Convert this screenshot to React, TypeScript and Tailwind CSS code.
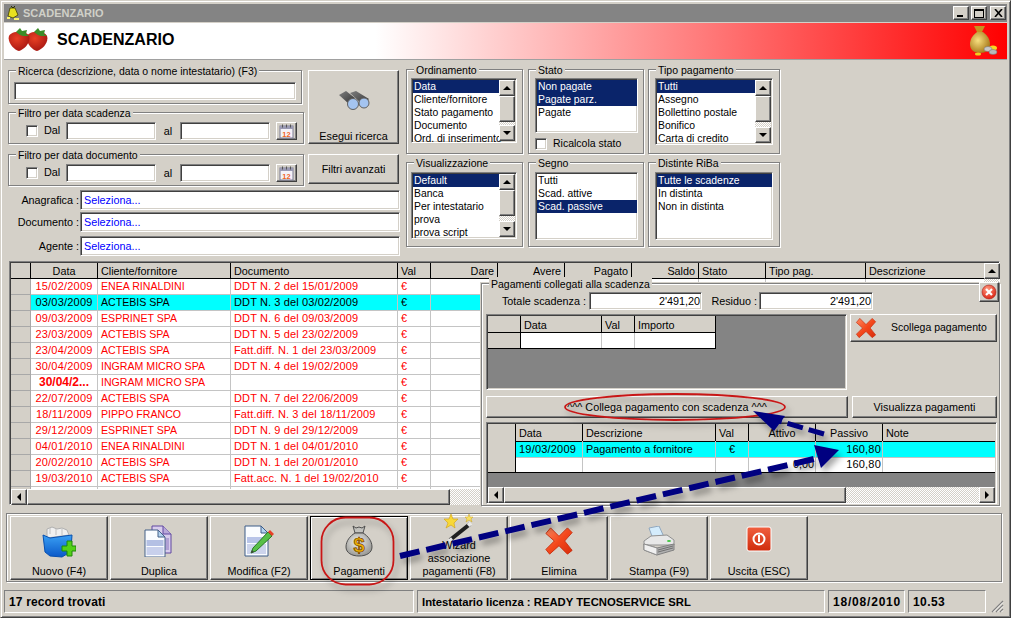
import React from "react";

const raised =
  "border border-t-white border-l-white border-r-[#404040] border-b-[#404040] shadow-[inset_-1px_-1px_0_#808080] bg-[#d4d0c8]";
const sunken =
  "border border-t-[#808080] border-l-[#808080] border-r-white border-b-white shadow-[inset_1px_1px_0_#404040,inset_-1px_-1px_0_#d4d0c8]";
const etched =
  "border border-[#808080] shadow-[inset_1px_1px_0_#fff,1px_1px_0_#fff]";
const dither =
  "bg-[repeating-conic-gradient(#ffffff_0_25%,#d4d0c8_0_50%)] bg-[length:2px_2px]";
const mainCols =
  "grid grid-cols-[20px_67px_133px_167px_33px_67px_67px_67px_67px_67px_100px_119px]";
const linkCols = "grid grid-cols-[33px_81px_33px_81px]";
const payCols = "grid grid-cols-[28px_67px_133px_33px_67px_67px_1fr]";
const headCell =
  "h-full border-r border-b border-black px-[3px] leading-[16px] truncate";
const statusCell =
  "border border-t-[#808080] border-l-[#808080] border-r-white border-b-white pl-[4px] leading-[23px] whitespace-nowrap";

const Arrow = ({ dir }: { dir: "up" | "down" | "left" | "right" }) => {
  const pts = {
    up: "4,1 0,5 8,5",
    down: "0,1 8,1 4,5",
    left: "5,0 5,8 1,4",
    right: "1,0 1,8 5,4",
  }[dir];
  const horizontal = dir === "left" || dir === "right";
  return (
    <svg
      width={horizontal ? 6 : 8}
      height={horizontal ? 8 : 6}
      viewBox={horizontal ? "0 0 6 8" : "0 0 8 6"}
    >
      <polygon points={pts} fill="#000" />
    </svg>
  );
};

const ScrollBtn = ({ dir }: { dir: "up" | "down" | "left" | "right" }) => (
  <div
    className={`${raised} w-[16px] h-[16px] shrink-0 flex items-center justify-center`}
  >
    <Arrow dir={dir} />
  </div>
);

const Legend = ({ children }: { children: React.ReactNode }) => (
  <span className="absolute -top-[7px] left-[7px] bg-[#d4d0c8] px-[2px] text-[10.5px] leading-[14px] whitespace-nowrap">
    {children}
  </span>
);

const ListBox = ({
  items,
  selected,
  scroll,
  className,
}: {
  items: string[];
  selected: number[];
  scroll?: boolean;
  className: string;
}) => (
  <div className={`${sunken} bg-white flex overflow-hidden text-[10.4px] ${className}`}>
    <div className="flex-1 min-w-0 pt-px pl-px">
      {items.map((item, i) => (
        <div
          key={item}
          className={`h-[13px] leading-[13px] pl-px whitespace-nowrap ${
            selected.includes(i) ? "bg-[#0a246a] text-white" : "text-black"
          }`}
        >
          {item}
        </div>
      ))}
    </div>
    {scroll && (
      <div className="w-[16px] shrink-0 flex flex-col mt-px mb-px mr-px">
        <ScrollBtn dir="up" />
        <div className={`${raised} h-[26px] shrink-0`} />
        <div className={`${dither} flex-1`} />
        <ScrollBtn dir="down" />
      </div>
    )}
  </div>
);

const CalendarIcon = () => (
  <svg width="15" height="15" viewBox="0 0 15 15">
    <rect x="1" y="2" width="13" height="12" fill="#f4f2f8" stroke="#7c7c94" />
    <rect x="1" y="2" width="13" height="3" fill="#9a9ab4" />
    <rect x="3" y="0.5" width="1" height="3" fill="#555" />
    <rect x="7" y="0.5" width="1" height="3" fill="#555" />
    <rect x="11" y="0.5" width="1" height="3" fill="#555" />
    <text
      x="7.5"
      y="12.5"
      textAnchor="middle"
      fontSize="7.5"
      fontWeight="700"
      fill="#f0641e"
      fontFamily="Liberation Sans"
    >
      12
    </text>
  </svg>
);

const DateFilter = ({ title }: { title: string }) => (
  <div className={`${etched} relative h-[32px] w-[296px] flex items-start pt-[9px]`}>
    <Legend>{title}</Legend>
    <div className={`${sunken} bg-white w-[12px] h-[12px] ml-[17px] mt-[3px]`} />
    <span className="ml-[6px] mt-[2px] w-[22px] leading-[13px]">Dal</span>
    <div className={`${sunken} bg-white w-[90px] h-[18px]`} />
    <span className="w-[24px] text-center mt-[3px] leading-[13px]">al</span>
    <div className={`${sunken} bg-white w-[90px] h-[18px]`} />
    <div
      className={`${raised} w-[21px] h-[18px] ml-[6px] flex items-center justify-center`}
    >
      <CalendarIcon />
    </div>
  </div>
);

const LookupRow = ({ label, className }: { label: string; className: string }) => (
  <div className={`flex items-center h-[20px] ${className}`}>
    <span className="w-[72px] pr-px text-right whitespace-nowrap">{label}</span>
    <div
      className={`${sunken} bg-white w-[320px] h-[20px] pl-[3px] leading-[18px] text-[#0000ff]`}
    >
      Seleziona...
    </div>
  </div>
);

const scadenze: [string, string, string][] = [
  ["15/02/2009", "ENEA RINALDINI", "DDT N. 2 del 15/01/2009"],
  ["03/03/2009", "ACTEBIS SPA", "DDT N. 3 del 03/02/2009"],
  ["09/03/2009", "ESPRINET SPA", "DDT N. 6 del 09/03/2009"],
  ["23/03/2009", "ACTEBIS SPA", "DDT N. 5 del 23/02/2009"],
  ["23/04/2009", "ACTEBIS SPA", "Fatt.diff. N. 1 del 23/03/2009"],
  ["30/04/2009", "INGRAM MICRO SPA", "DDT N. 4 del 19/02/2009"],
  ["30/04/2...", "INGRAM MICRO SPA", ""],
  ["22/07/2009", "ACTEBIS SPA", "DDT N. 7 del 22/06/2009"],
  ["18/11/2009", "PIPPO FRANCO", "Fatt.diff. N. 3 del 18/11/2009"],
  ["29/12/2009", "ESPRINET SPA", "DDT N. 9 del 29/12/2009"],
  ["04/01/2010", "ENEA RINALDINI", "DDT N. 1 del 04/01/2010"],
  ["20/02/2010", "ACTEBIS SPA", "DDT N. 1 del 20/01/2010"],
  ["19/03/2010", "ACTEBIS SPA", "Fatt.acc. N. 1 del 19/02/2010"],
  ["", "", ""],
];

const MainGrid = () => (
  <div className={`${sunken} bg-white relative ml-[8px] mt-[5px] w-[991px] h-[244px] flex`}>
    <div className="w-[974px] flex flex-col pl-px pt-px">
      <div className={`${mainCols} h-[16px] bg-[#d4d0c8] shrink-0`}>
        <div className={headCell} />
        <div className={`${headCell} text-center`}>Data</div>
        <div className={headCell}>Cliente/fornitore</div>
        <div className={headCell}>Documento</div>
        <div className={headCell}>Val</div>
        <div className={`${headCell} text-right`}>Dare</div>
        <div className={`${headCell} text-right`}>Avere</div>
        <div className={`${headCell} text-right`}>Pagato</div>
        <div className={`${headCell} text-right`}>Saldo</div>
        <div className={headCell}>Stato</div>
        <div className={headCell}>Tipo pag.</div>
        <div className={headCell}>Descrizione</div>
      </div>
      <div className="h-[210px] overflow-hidden shrink-0">
        {scadenze.map((row, i) => {
          const active = i === 1;
          const text = active ? "text-black" : "text-[#ff0000]";
          const cell = `h-[16px] border-r border-b border-[#c4c4c4] leading-[15px] truncate ${
            active ? "bg-[#00ffff]" : "bg-white"
          } ${text}`;
          return (
            <div key={i} className={mainCols}>
              <div className="h-[16px] bg-[#d4d0c8] border-r border-b border-[#a8a8a8]" />
              <div
                className={`${cell} text-center ${
                  i === 6 ? "font-bold text-[12px]" : "text-[11px] tracking-[0.2px]"
                }`}
              >
                {row[0]}
              </div>
              <div className={`${cell} pl-[3px] text-[10.6px]`}>{row[1]}</div>
              <div className={`${cell} pl-[3px] text-[11px] tracking-[0.12px]`}>{row[2]}</div>
              <div className={`${cell} pl-[3px]`}>{i === 13 ? "" : "€"}</div>
              <div className={cell} />
              <div className={cell} />
              <div className={cell} />
              <div className={cell} />
              <div className={cell} />
              <div className={cell} />
              <div className={cell} />
            </div>
          );
        })}
      </div>
      <div className="h-[16px] flex shrink-0">
        <ScrollBtn dir="left" />
        <div className={`${raised} w-[423px] shrink-0`} />
        <div className={`${dither} flex-1`} />
      </div>
    </div>
    <div className="w-[15px] pt-px flex flex-col">
      <ScrollBtn dir="up" />
      <div className={`${dither} flex-1`} />
    </div>

    {/* pannello sopra la griglia */}
    <div className="absolute left-[470px] top-[20px] w-[523px] h-[225px] bg-[#d4d0c8] pl-px pt-px">
      <div className={`${etched} relative w-[519px] h-[223px] pl-[4px] pt-[8px]`}>
        <Legend>Pagamenti collegati alla scadenza</Legend>
        <div
          className={`${raised} absolute right-[0px] -top-[2px] w-[20px] h-[20px] flex items-center justify-center`}
        >
          <svg width="16" height="16" viewBox="0 0 16 16">
            <defs>
              <radialGradient id="closeRed" cx="0.4" cy="0.3" r="0.8">
                <stop offset="0" stopColor="#ff9a80" />
                <stop offset="1" stopColor="#d81808" />
              </radialGradient>
            </defs>
            <circle cx="8" cy="8" r="7" fill="url(#closeRed)" stroke="#a82018" strokeWidth="0.6" />
            <path d="M5 5l6 6M11 5l-6 6" stroke="#fff" strokeWidth="2.2" />
          </svg>
        </div>
        <div className="flex items-center h-[18px]">
          <span className="w-[103px] pr-[3px] text-right whitespace-nowrap">Totale scadenza :</span>
          <div className={`${sunken} bg-white w-[113px] h-[18px] text-right leading-[16px] pr-px`}>
            2'491,20
          </div>
          <span className="w-[57px] pr-[2px] text-right whitespace-nowrap">Residuo :</span>
          <div className={`${sunken} bg-white w-[114px] h-[18px] text-right leading-[16px] pr-px`}>
            2'491,20
          </div>
        </div>
        <div className="flex mt-[4px] h-[76px]">
          <div className={`${sunken} bg-[#848484] w-[361px] h-[76px] pl-px pt-px`}>
            <div className="w-[228px]">
              <div className={`${linkCols} h-[17px] bg-[#d4d0c8]`}>
                <div className={`${headCell} pt-px`} />
                <div className={`${headCell} pt-px`}>Data</div>
                <div className={`${headCell} pt-px`}>Val</div>
                <div className={`${headCell} pt-px`}>Importo</div>
              </div>
              <div className={`${linkCols} h-[16px] border-b border-black`}>
                <div className="bg-[#d4d0c8] border-r border-black" />
                <div className="bg-white border-r border-[#c4c4c4]" />
                <div className="bg-white border-r border-[#c4c4c4]" />
                <div className="bg-white border-r border-black" />
              </div>
            </div>
          </div>
          <div className={`${raised} ml-[3px] w-[147px] h-[28px] flex items-center pl-[4px]`}>
            <XIcon size={22} />
            <span className="ml-[14px] text-[10.5px] whitespace-nowrap">Scollega pagamento</span>
          </div>
        </div>
        <div className="flex gap-[4px] mt-[6px]">
          <div className={`${raised} w-[362px] h-[22px] flex items-center justify-center`}>
            ^^^ Collega pagamento con scadenza ^^^
          </div>
          <div className={`${raised} w-[145px] h-[22px] flex items-center justify-center`}>
            Visualizza pagamenti
          </div>
        </div>
        <div className={`${sunken} bg-[#848484] mt-[4px] w-[511px] h-[82px] p-px`}>
          <div className={`${payCols} h-[17px] bg-[#d4d0c8]`}>
            <div className={`${headCell} pt-px`} />
            <div className={`${headCell} pt-px`}>Data</div>
            <div className={`${headCell} pt-px`}>Descrizione</div>
            <div className={`${headCell} pt-px`}>Val</div>
            <div className={`${headCell} pt-px text-center`}>Attivo</div>
            <div className={`${headCell} pt-px text-center`}>Passivo</div>
            <div className="h-full border-b border-black pt-px px-[3px] leading-[16px]">Note</div>
          </div>
          <div className={`${payCols} h-[16px] bg-[#00ffff]`}>
            <div className="bg-[#d4d0c8] border-r border-b border-black" />
            <div className="border-r border-b border-[#c4c4c4] leading-[16px] px-[3px] text-[11px] tracking-[0.2px] whitespace-nowrap">
              19/03/2009
            </div>
            <div className="border-r border-b border-[#c4c4c4] leading-[16px] px-[3px]">
              Pagamento a fornitore
            </div>
            <div className="border-r border-b border-[#c4c4c4] leading-[16px] text-center">€</div>
            <div className="border-r border-b border-[#c4c4c4]" />
            <div className="border-r border-b border-[#c4c4c4] leading-[16px] text-right pr-px text-[11px] tracking-[0.2px]">
              160,80
            </div>
            <div className="border-b border-[#c4c4c4]" />
          </div>
          <div className={`${payCols} h-[16px] bg-white border-b border-black`}>
            <div className="bg-[#d4d0c8] border-r border-black" />
            <div className="border-r border-[#c4c4c4]" />
            <div className="border-r border-[#c4c4c4]" />
            <div className="border-r border-[#c4c4c4]" />
            <div className="border-r border-[#c4c4c4] leading-[15px] text-right pr-px">0,00</div>
            <div className="border-r border-[#c4c4c4] leading-[15px] text-right pr-px text-[11px] tracking-[0.2px]">
              160,80
            </div>
            <div />
          </div>
          <div className="h-[14px]" />
          <div className="h-[16px] flex">
            <ScrollBtn dir="left" />
            <div className={`${raised} w-[342px]`} />
            <div className={`${dither} flex-1`} />
            <ScrollBtn dir="right" />
          </div>
        </div>
      </div>
    </div>
  </div>
);

function XIcon({ size }: { size: number }) {
  return (
    <svg width={size} height={size} viewBox="0 0 32 32" className="shrink-0">
      <defs>
        <linearGradient id={`xRed${size}`} x1="0" y1="0" x2="1" y2="1">
          <stop offset="0" stopColor="#ff8a60" />
          <stop offset="0.5" stopColor="#f4481c" />
          <stop offset="1" stopColor="#d82c0c" />
        </linearGradient>
      </defs>
      <path
        d="M7 2l9 9 9-9 5 5-8 9 8 10-5 4-9-9-10 9-4-5 9-9-9-8z"
        fill={`url(#xRed${size})`}
        stroke="#c83010"
        strokeLinejoin="round"
      />
    </svg>
  );
}

const NewIcon = () => (
  <svg width="34" height="32" viewBox="0 0 34 32">
    <defs>
      <linearGradient id="boxBlue" x1="0" y1="0" x2="0" y2="1">
        <stop offset="0" stopColor="#3aa0f4" />
        <stop offset="1" stopColor="#0a58c8" />
      </linearGradient>
    </defs>
    <path d="M5 3l5-2 5 2 5-1 5 2 2 5-22 3z" fill="#f0f0f0" stroke="#b0b0b0" />
    <path d="M8 2v6M14 3v6M20 3v6" stroke="#c0c0c0" />
    <path
      d="M1 9l7 3 22-3-1 14-4 5-5 3-12-1-5-4z"
      fill="url(#boxBlue)"
      stroke="#0850b0"
      strokeLinejoin="round"
    />
    <path
      d="M20 20h5v-5h5v5h4v5h-4v5h-5v-5h-5z"
      fill="#54d018"
      stroke="#1c8808"
      strokeWidth="1"
    />
  </svg>
);

const CopyIcon = () => (
  <svg width="30" height="32" viewBox="0 0 30 32">
    <path d="M8 1h11l8 8v19H8z" fill="#d8ccec" stroke="#6048a0" />
    <path d="M19 1v8h8" fill="#b8a8d8" stroke="#6048a0" />
    <rect x="18" y="13" width="7" height="12" fill="#b0a0d4" />
    <path d="M1 5h13l7 7v20H1z" fill="#fafcff" stroke="#446088" />
    <path d="M14 5v7h7z" fill="#b4d4f0" stroke="#446088" />
    <rect x="2.5" y="15" width="17" height="6" fill="#b4c0e4" />
    <rect x="2.5" y="22" width="17" height="8" fill="#c8d0ec" />
  </svg>
);

const EditIcon = () => (
  <svg width="30" height="32" viewBox="0 0 30 32">
    <path d="M1 1h16l7 7v23H1z" fill="#fafcff" stroke="#3c5c88" />
    <path d="M17 1v7h7z" fill="#b4d4f0" stroke="#3c5c88" />
    <rect x="3" y="12" width="19" height="6" fill="#b8c4e8" />
    <rect x="3" y="19" width="19" height="10" fill="#ccd4ec" />
    <path d="M24 7l4 4-16 15-5 2 2-5z" fill="#58c048" stroke="#287820" strokeLinejoin="round" />
    <path d="M24 7l2-2 4 4-2 2z" fill="#e84028" />
    <path d="M7 28l1-3 2 2z" fill="#404040" />
  </svg>
);

const BagIcon = () => (
  <svg width="28" height="32" viewBox="0 0 28 32">
    <defs>
      <radialGradient id="bagGray" cx="0.45" cy="0.4" r="0.7">
        <stop offset="0" stopColor="#f0f0ee" />
        <stop offset="1" stopColor="#8c8c88" />
      </radialGradient>
    </defs>
    <path d="M8 1l3 2 3-1 3 1 3-2-2 7h-8z" fill="#c4c4c0" stroke="#505050" />
    <path
      d="M10 8h8c5 3 9 8 9 14 0 6-6 9-13 9S1 28 1 22c0-6 4-11 9-14z"
      fill="url(#bagGray)"
      stroke="#505050"
    />
    <text
      x="14"
      y="27"
      textAnchor="middle"
      fontSize="20"
      fontWeight="700"
      fill="#f0b000"
      stroke="#704000"
      strokeWidth="0.7"
      fontFamily="Liberation Sans"
    >
      $
    </text>
  </svg>
);

const WandIcon = () => (
  <svg width="30" height="30" viewBox="0 0 30 30" className="-mb-[3px]">
    <path
      d="M7 2l2 5 5 0-4 4 1 5-4-3-5 3 2-5-4-4 5 0z"
      fill="#f8d838"
      stroke="#d0a010"
      strokeWidth="0.6"
    />
    <path d="M25 2l1 3h3l-2 2 1 3-3-2-3 2 1-3-2-2h3z" fill="#f8e060" stroke="#c8a020" strokeWidth="0.5" />
    <path d="M26 12L6 28" stroke="#202020" strokeWidth="4" />
    <path d="M27 11l-3 2.500" stroke="#e8e8e8" strokeWidth="4" />
    <path d="M8 26.500L5 29" stroke="#e8e8e8" strokeWidth="3" />
  </svg>
);

const PrinterIcon = () => (
  <svg width="32" height="30" viewBox="0 0 32 30">
    <path d="M6 2l10-2 5 11-11 2z" fill="#d4ecfc" stroke="#90a8c0" />
    <path d="M1 15l7-5 16-1 7 5v5H1z" fill="#e8e8e8" stroke="#909090" />
    <path d="M1 18l13 4 17-4v6l-17 5-13-5z" fill="#b0b0b0" stroke="#808080" />
    <path d="M1 18l13 4v7l-13-5z" fill="#f0f0f0" stroke="#909090" />
    <path d="M15 24l15-4M15 26l15-4" stroke="#707070" />
    <ellipse cx="26" cy="15" rx="2" ry="1" fill="#40c840" />
  </svg>
);

const PowerIcon = () => (
  <svg width="26" height="26" viewBox="0 0 26 26">
    <defs>
      <linearGradient id="powerRed" x1="0" y1="0" x2="0" y2="1">
        <stop offset="0" stopColor="#f06040" />
        <stop offset="1" stopColor="#d02c0c" />
      </linearGradient>
    </defs>
    <rect x="1" y="1" width="24" height="24" rx="2" fill="url(#powerRed)" stroke="#fff" />
    <circle cx="13" cy="13" r="5.500" fill="none" stroke="#fff" strokeWidth="2" />
    <rect x="12" y="9" width="2" height="7" fill="#fff" />
  </svg>
);

const toolbar: { label: string[]; icon: React.ReactNode; mb: string; active?: boolean }[] = [
  { label: ["Nuovo (F4)"], icon: <NewIcon />, mb: "mb-[7px]" },
  { label: ["Duplica"], icon: <CopyIcon />, mb: "mb-[8px]" },
  { label: ["Modifica (F2)"], icon: <EditIcon />, mb: "mb-[8px]" },
  { label: ["Pagamenti"], icon: <BagIcon />, mb: "mb-[8px]", active: true },
  { label: ["Wizard", "associazione", "pagamenti (F8)"], icon: <WandIcon />, mb: "mb-0" },
  { label: ["Elimina"], icon: <XIcon size={30} />, mb: "mb-[9px]" },
  { label: ["Stampa (F9)"], icon: <PrinterIcon />, mb: "mb-[9px]" },
  { label: ["Uscita (ESC)"], icon: <PowerIcon />, mb: "mb-[13px]" },
];

const Strawberry = ({ x }: { x: number }) => (
  <g transform={`translate(${x} 0)`}>
    <path d="M1 9c2-5 17-6 20 0 2 6-4 13-10 15C6 23-1 15 1 9z" fill="url(#berry)" />
    <path d="M8 5l4-4 2 3 5-1-1 4 3 2-6 0-3-1z" fill="#3c8c28" />
  </g>
);

export default function App() {
  return (
    <div className="relative w-[1011px] h-[618px] overflow-hidden bg-[#d4d0c8] text-black text-[10.8px] font-['Liberation_Sans',sans-serif] border border-t-[#d4d0c8] border-l-[#d4d0c8] border-r-[#404040] border-b-[#404040] shadow-[inset_1px_1px_0_#fff,inset_-1px_-1px_0_#808080]">
      <div className="pt-[3px] px-[3px]">
        {/* barra del titolo */}
        <div className="h-[18px] bg-[#848484] flex items-center pl-px pr-[1px]">
          <svg width="16" height="16" viewBox="0 0 16 16">
            <path d="M5 3h5l3 7-5 3-5-2z" fill="#e8e020" stroke="#404000" strokeWidth="0.8" />
            <path d="M6 1l2 2 2-2" stroke="#303000" fill="none" />
            <path d="M9 13h5v2H9zM2 12h3v2H2z" fill="#f8f070" />
          </svg>
          <span className="ml-[2px] text-[11px] font-bold text-[#d0d0c8] whitespace-nowrap">
            SCADENZARIO
          </span>
          <div className="ml-auto flex gap-[2px]">
            <div className={`${raised} w-[16px] h-[14px] flex items-end justify-start pl-[3px] pb-[2px]`}>
              <div className="w-[6px] h-[2px] bg-black" />
            </div>
            <div className={`${raised} w-[16px] h-[14px] flex items-center justify-center`}>
              <div className="w-[10px] h-[9px] border border-t-2 border-black" />
            </div>
            <div className={`${raised} w-[16px] h-[14px] ml-px flex items-center justify-center`}>
              <svg width="9" height="8" viewBox="0 0 9 8">
                <path d="M1 0l7 8M8 0l-7 8" stroke="#000" strokeWidth="1.600" />
              </svg>
            </div>
          </div>
        </div>

        {/* intestazione */}
        <div className="mt-px h-[37px] border-b border-[#a0a0a0] bg-[linear-gradient(90deg,#ffffff_0%,#ffffff_37%,#ff0000_100%)] flex items-center pl-[4px] pr-[8px] pb-[2px]">
          <svg width="40" height="26" viewBox="0 0 40 26" className="shrink-0">
            <defs>
              <radialGradient id="berry" cx="0.4" cy="0.35" r="0.75">
                <stop offset="0" stopColor="#e84024" />
                <stop offset="1" stopColor="#a01210" />
              </radialGradient>
            </defs>
            <Strawberry x={18} />
            <Strawberry x={0} />
          </svg>
          <span className="ml-[9px] text-[16px] font-bold whitespace-nowrap">SCADENZARIO</span>
          <svg width="32" height="32" viewBox="0 0 30 32" className="ml-auto shrink-0">
            <defs>
              <radialGradient id="goldBag" cx="0.4" cy="0.4" r="0.7">
                <stop offset="0" stopColor="#f8e080" />
                <stop offset="1" stopColor="#a07010" />
              </radialGradient>
            </defs>
            <path d="M6 2h11l-3 6h-5z" fill="#c89020" />
            <path d="M9 8h6c4 3 7 7 7 12 0 6-4 9-10 9S2 26 2 20c0-5 3-9 7-12z" fill="url(#goldBag)" />
            <ellipse cx="25" cy="24" rx="4" ry="2.500" fill="#f8d820" />
            <ellipse cx="20" cy="25" rx="4" ry="2.500" fill="#c8c8c8" stroke="#707070" strokeWidth="0.5" />
            <ellipse cx="25" cy="28" rx="4" ry="2.500" fill="#b8b8b8" stroke="#707070" strokeWidth="0.5" />
            <ellipse cx="10" cy="30" rx="3" ry="1.500" fill="#f0d020" />
          </svg>
        </div>
      </div>

      {/* filtri */}
      <div className="flex pl-[7px] pt-[10px]">
        <div className="w-[398px] shrink-0">
          <div className="flex gap-[4px]">
            <div className="w-[296px] flex flex-col">
              <div className={`${etched} relative h-[34px] w-[294px] pl-[5px] pt-[11px]`}>
                <Legend>Ricerca (descrizione, data o nome intestatario) (F3)</Legend>
                <div className={`${sunken} bg-white w-[282px] h-[18px]`} />
              </div>
              <div className="mt-[8px]">
                <DateFilter title="Filtro per data scadenza" />
              </div>
              <div className="mt-[10px]">
                <DateFilter title="Filtro per data documento" />
              </div>
            </div>
            <div className="w-[91px] flex flex-col">
              <button className={`${raised} h-[74px] flex flex-col items-center justify-end pb-0 leading-[13px]`}>
                <svg width="32" height="24" viewBox="0 0 32 24" className="mb-[17px]">
                  <defs>
                    <linearGradient id="bino" x1="0" y1="0" x2="1" y2="1">
                      <stop offset="0" stopColor="#808080" />
                      <stop offset="1" stopColor="#303030" />
                    </linearGradient>
                  </defs>
                  <path d="M1 6l7-4 9 7-6 6z" fill="url(#bino)" />
                  <path d="M12 4l6-2 13 8-6 6z" fill="url(#bino)" />
                  <circle cx="15" cy="15" r="5.500" fill="#a4c4f0" stroke="#606060" />
                  <circle cx="26" cy="14" r="5" fill="#a4c4f0" stroke="#606060" />
                </svg>
                Esegui ricerca
              </button>
              <button className={`${raised} h-[30px] mt-[10px] pt-px`}>Filtri avanzati</button>
            </div>
          </div>
          <LookupRow label="Anagrafica :" className="mt-[4px]" />
          <LookupRow label="Documento :" className="mt-[2px]" />
          <LookupRow label="Agente :" className="mt-[4px]" />
        </div>

        <div className="ml-[0px] -mt-px flex flex-col gap-[8px]">
          <div className="flex gap-[5px]">
            <div className={`${etched} relative w-[117px] h-[85px] pl-[4px] pt-[8px]`}>
              <Legend>Ordinamento</Legend>
              <ListBox
                className="w-[106px] h-[65px]"
                scroll
                selected={[0]}
                items={["Data", "Cliente/fornitore", "Stato pagamento", "Documento", "Ord. di inserimento"]}
              />
            </div>
            <div className={`${etched} relative w-[116px] h-[85px] pl-[6px] pt-[8px]`}>
              <Legend>Stato</Legend>
              <ListBox
                className="w-[103px] h-[55px]"
                selected={[0, 1]}
                items={["Non pagate", "Pagate parz.", "Pagate"]}
              />
              <div className="flex items-center mt-[3px]">
                <div className={`${sunken} bg-white w-[12px] h-[12px]`} />
                <span className="ml-[6px] text-[10.5px]">Ricalcola stato</span>
              </div>
            </div>
            <div className={`${etched} relative w-[132px] h-[85px] ml-[-1px] pl-[6px] pt-[8px]`}>
              <Legend>Tipo pagamento</Legend>
              <ListBox
                className="w-[118px] h-[67px]"
                scroll
                selected={[0]}
                items={["Tutti", "Assegno", "Bollettino postale", "Bonifico", "Carta di credito"]}
              />
            </div>
          </div>
          <div className="flex gap-[5px]">
            <div className={`${etched} relative w-[117px] h-[85px] pl-[4px] pt-[9px]`}>
              <Legend>Visualizzazione</Legend>
              <ListBox
                className="w-[106px] h-[67px]"
                scroll
                selected={[0]}
                items={["Default", "Banca", "Per intestatario", "prova", "prova script"]}
              />
            </div>
            <div className={`${etched} relative w-[116px] h-[85px] pl-[6px] pt-[9px]`}>
              <Legend>Segno</Legend>
              <ListBox
                className="w-[103px] h-[68px]"
                selected={[2]}
                items={["Tutti", "Scad. attive", "Scad. passive"]}
              />
            </div>
            <div className={`${etched} relative w-[132px] h-[85px] ml-[-1px] pl-[6px] pt-[9px]`}>
              <Legend>Distinte RiBa</Legend>
              <ListBox
                className="w-[118px] h-[68px]"
                selected={[0]}
                items={["Tutte le scadenze", "In distinta", "Non in distinta"]}
              />
            </div>
          </div>
        </div>
      </div>

      <MainGrid />

      {/* pulsanti */}
      <div className={`${etched} ml-[5px] mt-[8px] w-[996px] h-[69px] flex gap-[2px] pl-[3px] pt-[2px]`}>
        {toolbar.map((b) => (
          <div
            key={b.label[0]}
            className={`w-[98px] h-[64px] flex flex-col items-center justify-end pb-px leading-[13px] ${
              b.active
                ? "bg-[#d4d0c8] border border-black shadow-[inset_1px_1px_0_#fff,inset_-1px_-1px_0_#808080]"
                : raised
            }`}
          >
            <div className={b.mb}>{b.icon}</div>
            {b.label.map((l) => (
              <span key={l} className="whitespace-nowrap">
                {l}
              </span>
            ))}
          </div>
        ))}
      </div>

      {/* barra di stato */}
      <div className="flex gap-[3px] ml-[3px] mt-[8px] h-[23px] font-bold">
        <div className={`${statusCell} w-[410px] text-[12px] tracking-[0.15px]`}>17 record trovati</div>
        <div className={`${statusCell} w-[408px] text-[11.3px]`}>
          Intestatario licenza : READY TECNOSERVICE SRL
        </div>
        <div className={`${statusCell} w-[77px] text-[12px] tracking-[0.8px]`}>18/08/2010</div>
        <div className={`${statusCell} w-[78px] text-[12px] tracking-[0.4px]`}>10.53</div>
        <svg width="14" height="14" viewBox="0 0 14 14" className="self-end ml-px">
          <path d="M13 2L2 13M13 6l-7 7M13 10l-3 3" stroke="#808080" strokeWidth="1.200" />
          <path d="M13 3.500L3.500 13M13 7.500L7.500 13M13 11.500L11.500 13" stroke="#fff" strokeWidth="0.800" />
        </svg>
      </div>

      {/* annotazioni sopra lo screenshot */}
      <svg
        className="absolute -left-px -top-px pointer-events-none"
        width="1011"
        height="618"
        viewBox="0 0 1011 618"
      >
        <defs>
          <filter id="annShadow" x="-20%" y="-40%" width="140%" height="200%">
            <feDropShadow dx="3" dy="5" stdDeviation="3" floodColor="#000" floodOpacity="0.35" />
          </filter>
        </defs>
        <g filter="url(#annShadow)">
          <ellipse cx="675" cy="407" rx="110" ry="13" fill="none" stroke="#c81818" strokeWidth="1.800" />
          <rect x="321.500" y="517.500" width="72" height="67" rx="24" fill="none" stroke="#c81818" strokeWidth="1.800" />
        </g>
        <g filter="url(#annShadow)">
          <path d="M400 556L818 458" stroke="#000080" strokeWidth="6" strokeDasharray="20 7" fill="none" />
          <polygon points="839,450 814,445 821,468" fill="#000080" />
          <path d="M824 434L772 419" stroke="#000080" strokeWidth="5" strokeDasharray="16 6" fill="none" />
          <polygon points="753,411 785,416 774,431" fill="#000080" />
        </g>
      </svg>
    </div>
  );
}
